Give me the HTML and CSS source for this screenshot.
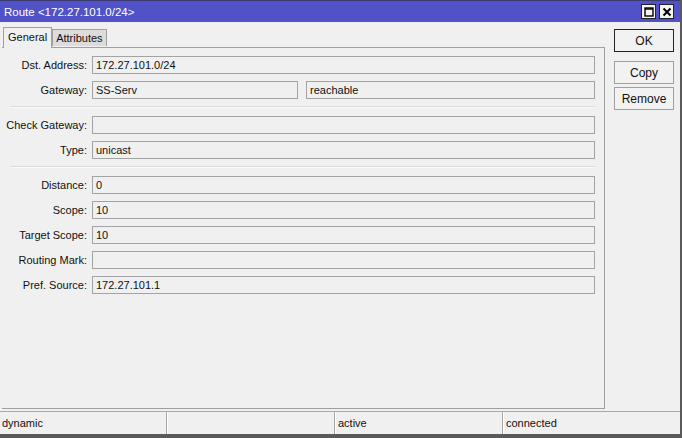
FILE: index.html
```html
<!DOCTYPE html>
<html lang="en">
<head>
    <meta charset="UTF-8">
    <title>Route</title>
    <link rel="stylesheet" href="styles.css">
</head>
<body>
    <div class="window">
        <div class="titlebar">
            <span class="title">Route &lt;172.27.101.0/24&gt;</span>
            <div class="title-buttons">
                <span class="tbtn">
                    <svg width="10" height="10" viewBox="0 0 10 10"><rect x="1" y="1" width="8" height="8" fill="none" stroke="#000" stroke-width="1.4"/><line x1="1" y1="2" x2="9" y2="2" stroke="#000" stroke-width="1.4"/></svg>
                </span>
                <span class="tbtn">
                    <svg width="10" height="10" viewBox="0 0 10 10"><path d="M1.5 1.5 L8.5 8.5 M8.5 1.5 L1.5 8.5" stroke="#000" stroke-width="2"/></svg>
                </span>
            </div>
        </div>

        <div class="main">
            <div class="left">
                <div class="tabs">
                    <div class="tab active">General</div>
                    <div class="tab">Attributes</div>
                </div>
                <div class="panel">
                    <div class="row">
                        <label>Dst. Address:</label>
                        <div class="field">172.27.101.0/24</div>
                    </div>
                    <div class="row">
                        <label>Gateway:</label>
                        <div class="field gw">SS-Serv</div>
                        <div class="field state">reachable</div>
                    </div>
                    <div class="sep"></div>
                    <div class="row">
                        <label>Check Gateway:</label>
                        <div class="field"></div>
                    </div>
                    <div class="row">
                        <label>Type:</label>
                        <div class="field">unicast</div>
                    </div>
                    <div class="sep"></div>
                    <div class="row">
                        <label>Distance:</label>
                        <div class="field">0</div>
                    </div>
                    <div class="row">
                        <label>Scope:</label>
                        <div class="field">10</div>
                    </div>
                    <div class="row">
                        <label>Target Scope:</label>
                        <div class="field">10</div>
                    </div>
                    <div class="row">
                        <label>Routing Mark:</label>
                        <div class="field"></div>
                    </div>
                    <div class="row">
                        <label>Pref. Source:</label>
                        <div class="field">172.27.101.1</div>
                    </div>
                </div>
            </div>
            <div class="right">
                <button class="button default">OK</button>
                <button class="button">Copy</button>
                <button class="button">Remove</button>
            </div>
        </div>

        <div class="statusbar">
            <div class="cell">dynamic</div>
            <div class="cell"></div>
            <div class="cell">active</div>
            <div class="cell last">connected</div>
        </div>
    </div>
</body>
</html>
```

FILE: styles.css
```css
body {
    margin: 0;
    background: #f0f0f0;
    font-family: "Liberation Sans", Arial, sans-serif;
    font-size: 11px;
    color: #111;
}

.window {
    width: 682px;
    height: 438px;
    box-sizing: border-box;
    background: #f0f0f0;
    border-right: 2px solid #5a5a5a;
    border-bottom: 4px solid #5a5a5a;
    display: flex;
    flex-direction: column;
}

.titlebar {
    height: 22px;
    box-sizing: border-box;
    border-top: 1px solid #3a3a70;
    background: #5252c8;
    color: #fff;
    display: flex;
    align-items: center;
    justify-content: space-between;
    padding: 0 6px 0 4px;
}

.title {
    font-size: 11.5px;
}

.title-buttons {
    display: flex;
    gap: 3px;
}

.tbtn {
    width: 13px;
    height: 13px;
    background: #f4f4f4;
    border: 1px solid #222;
    display: flex;
    align-items: center;
    justify-content: center;
}

.main {
    flex: 1;
    display: flex;
}

.left {
    width: 603px;
    margin-left: 2px;
    display: flex;
    flex-direction: column;
}

.tabs {
    display: flex;
    align-items: flex-end;
    height: 25px;
    padding-left: 1px;
}

.tab {
    box-sizing: border-box;
    height: 17px;
    padding: 0 3px;
    border: 1px solid #a0a0a0;
    border-bottom: none;
    background: #dcdcdc;
    display: flex;
    align-items: center;
    margin-bottom: 1px;
}

.tab.active {
    height: 21px;
    background: #f0f0f0;
    margin-bottom: -1px;
    position: relative;
    z-index: 1;
    padding: 0 4px 2px 4px;
}

.panel {
    flex: 1;
    border-top: 1px solid #a0a0a0;
    border-right: 1px solid #a0a0a0;
    border-bottom: 1px solid #a0a0a0;
    padding: 8px 9px 0 0;
    display: flex;
    flex-direction: column;
    gap: 7px;
}

.row {
    display: flex;
    align-items: center;
    height: 18px;
}

.row label {
    width: 85px;
    text-align: right;
    padding-right: 5px;
    flex-shrink: 0;
}

.field {
    flex: 1;
    height: 18px;
    box-sizing: border-box;
    border: 1px solid #a3a3a3;
    background: #f0f0f0;
    padding: 0 3px;
    line-height: 16px;
    white-space: nowrap;
}

.field.gw {
    flex: 0 0 206px;
}

.field.state {
    margin-left: 8px;
}

.sep {
    height: 0;
    border-top: 1px solid #dadada;
    border-bottom: 1px solid #fafafa;
    margin: 0 0 1px 8px;
}

.right {
    display: flex;
    flex-direction: column;
    margin-left: 9px;
    padding-top: 7px;
}

.button {
    width: 60px;
    height: 23px;
    box-sizing: border-box;
    border: 1px solid #a0a0a0;
    background: #f2f2f2;
    font-family: inherit;
    font-size: 12px;
    color: #111;
    padding: 0;
    margin-bottom: 3px;
}

.button.default {
    border: 1px solid #222;
    margin-bottom: 9px;
}

.statusbar {
    height: 22px;
    margin-top: 2px;
    border-top: 1px solid #a8a8a8;
    display: flex;
}

.cell {
    box-sizing: border-box;
    width: 168px;
    border-right: 1px solid #a8a8a8;
    border-left: 1px solid #fff;
    padding-left: 2px;
    display: flex;
    align-items: center;
}

.cell:first-child {
    width: 167px;
    border-left: none;
}

.cell.last {
    flex: 1;
    border-right: none;
}
```
